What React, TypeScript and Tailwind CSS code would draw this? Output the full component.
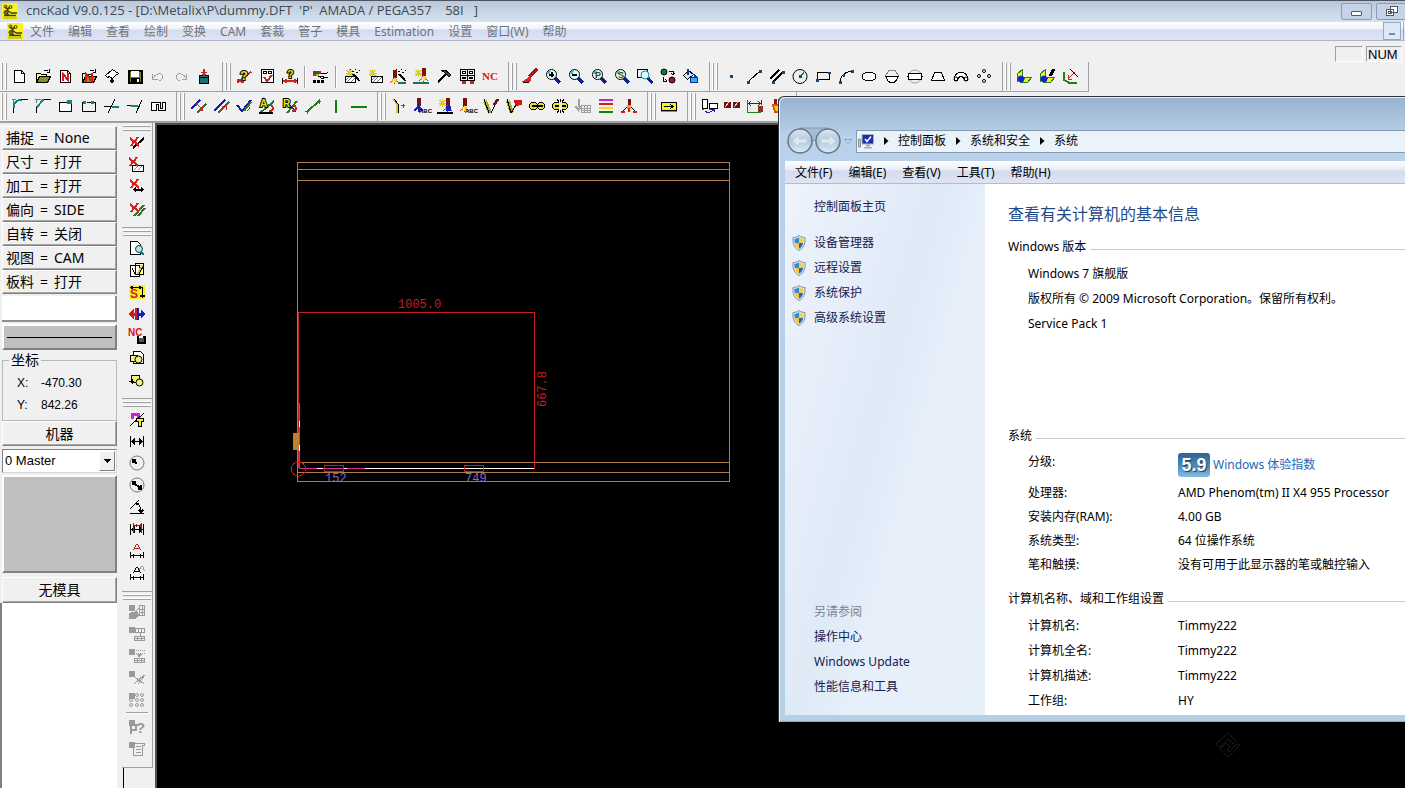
import React from "react";

type PathProps = { d: string; c?: string; w?: number; f?: string };

const P = ({ d, c = "#000", w = 1, f = "none" }: PathProps) => (
  <path d={d} stroke={c} strokeWidth={w} fill={f} />
);

type DiscProps = { x: number; y: number; r: number; f?: string; c?: string };

const Disc = ({ x, y, r, f = "none", c = "#000" }: DiscProps) => (
  <circle cx={x} cy={y} r={r} fill={f} stroke={c} shapeRendering="auto" />
);

type LabelProps = { x: number; y: number; s: number; c?: string; o?: string; children: string };

const T = ({ x, y, s, c = "#000", o = "none", children }: LabelProps) => (
  <text
    x={x}
    y={y}
    fontSize={s}
    fontWeight="bold"
    fill={c}
    stroke={o}
    strokeWidth={2}
    paintOrder="stroke"
    fontFamily="'Liberation Sans', sans-serif"
  >
    {children}
  </text>
);

/* Shared icon parts */
const Page = () => (
  <>
    <P d="M2.5 2.5h7l3 3v9h-10z" f="#fff" />
    <P d="M9.5 2.5v3h3" />
  </>
);

const Folder = () => (
  <>
    <P d="M1.5 13.5v-8h4l1 1h5v2" f="#ffff99" />
    <P d="M1.5 14.5l3-6h11l-3 6z" f="#8c8c20" />
    <P d="M8.5 3.5c2-2 4-2 5 0M14.5 1v3.5h-3" />
  </>
);

const Lens = () => (
  <>
    <P d="M10.5 10.5l4.5 4.5" c="#10208c" w={3} />
    <Disc x={6.5} y={6.5} r={5} f="#e0ffff" />
    <P d="M3 6l2-3" c="#20c8d8" w={2} />
  </>
);

const Punch = () => (
  <>
    <P d="M10.5 0v8" c="#7a1010" w={4} />
    <P d="M10.5 7l-4 6M10.5 7l4 6M10.5 7v7" c="#e02020" />
    <P d="M10.5 8v5" c="#f8e020" w={2} />
    <P d="M8.5 9v3M12.5 9v3" c="#f8a020" />
  </>
);

const Burst = () => (
  <P d="M5.5 1v8M1.5 5h8M2.5 2l6 6M8.5 2l-6 6" c="#d8cc20" />
);

const Wand = () => (
  <>
    <P d="M9 6l6.5 7" w={2} />
    <P d="M8 3h2M11 1h1M12 4h2M15 2h1M6 1h1" />
  </>
);

const Hatch = () => (
  <>
    <P d="M1.5 8.5h10v6h-10z" f="#fff" />
    <P d="M2 12l3-3M3 14l5-5M7 14l4-4" c="#777" />
  </>
);

const Cross = () => <P d="M1 3l9 8M9 2L2 11" c="#d02020" w={2} />;

const Dim = () => (
  <>
    <P d="M1.5 3v11M14.5 3v11M2 8.5h12" />
    <P d="M5.5 6v5L2.5 8.5zM10.5 6v5l3-2.5z" f="#000" />
  </>
);

const Chain = () => (
  <>
    <P d="M2.5 4.5h4l2 2v3l-2 2h-4l-2-2v-3zM10.5 4.5h3l2 2v3l-2 2h-3l-2-2v-3z" f="#e8e030" />
    <P d="M3 7.5h3v1H3zM10 7.5h3v1h-3z" f="#f0f0f0" />
    <P d="M6 8h5" w={2} />
  </>
);

const GraySquare = () => <path d="M0 1h6v6H0z" fill="#9a9a9a" />;

const GrayTable = () => (
  <P d="M5.5 10.5h10v4h-10zM5.5 12.5h10M8.5 10v5M12.5 10v5" c="#9a9a9a" />
);

const Bins = ({ extra }: { extra?: React.ReactNode }) => (
  <>
    <P d="M1.5 5.5l5-4v8l-5 4z" f="#f4f020" c="#208020" />
    <P d="M5 14.5l4-5h6.5l-4 5z" f="#f4f020" c="#208020" />
    <Disc x={5} y={11} r={3} f="#1020d0" c="#1020d0" />
    {extra}
  </>
);

const icons: Record<string, React.ReactNode> = {
  New: <Page />,
  Open: <Folder />,
  "New part": (
    <>
      <Page />
      <P d="M5 13V6l5 6V5" c="#e01818" w={2} />
    </>
  ),
  "Open NC": (
    <>
      <Folder />
      <P d="M5 14V6l6 7V5" c="#e01818" w={2} />
    </>
  ),
  Import: (
    <>
      <P d="M1.5 7.5L8.5 1.5l6 4-3 2-3 3-3-2-2 1z" f="#fff" />
      <P d="M7.5 10v5M5.5 12.5h4M6.5 14h2" w={2} />
    </>
  ),
  Save: (
    <>
      <P d="M1.5 2.5h13v12h-13z" f="#7a7a20" w={2} />
      <path d="M4 3h8v6H4z" fill="#fff" />
      <path d="M4 10h9v5H4z" fill="#000" />
      <path d="M10 11h2v3h-2z" fill="#fff" />
    </>
  ),
  Undo: <P d="M2.5 6v5h5M3.5 10c1-4 8-6 9-2 1 2-1 4-3 5" c="#a0a0a0" />,
  Redo: <P d="M13.5 6v5h-5M12.5 10c-1-4-8-6-9-2-1 2 1 4 3 5" c="#a0a0a0" />,
  Transfer: (
    <>
      <P d="M3.5 7.5h9v8h-9z" f="#187070" />
      <P d="M4 9.5h8" />
      <P d="M8 1v7" c="#d02020" w={2} />
      <P d="M5 4.5h6M6 6h4" c="#d02020" />
    </>
  ),
  "Query line": (
    <>
      <P d="M1 14.5L15.5 3.5M1 11.5l7 3" c="#d02020" w={2} />
      <T x={4} y={12} s={13} c="#e8e020" o="#000">?</T>
    </>
  ),
  "Check list": (
    <>
      <P d="M2.5 1.5h12v13h-12z" f="#fff" />
      <P d="M4.5 3.5h3v2h-3zM9.5 3.5h3v2h-3z" />
      <P d="M5 9l3 4 5-6" c="#d02020" w={2} />
    </>
  ),
  "Query distance": (
    <>
      <T x={5} y={10} s={11} c="#e8e020" o="#000">?</T>
      <P d="M1 13h14M3.5 11v4M12.5 11v4" c="#d02020" w={2} />
      <P d="M.5 10v6M15.5 10v6" />
    </>
  ),
  Properties: (
    <>
      <path d="M0 3h3v3H0z" fill="#7020a0" />
      <path d="M3 3h3v3H3z" fill="#107030" />
      <path d="M6 3h2v3H6z" fill="#d02020" />
      <path d="M0 6h3v2H0z" fill="#d02020" />
      <path d="M3 6h3v2H3z" fill="#c0b020" />
      <P d="M8 5.5h5l2-1M15 9.5h-3l-3 1-3-2h5" />
      <path d="M0 12h3v3H0zM4 12h3v3H4zM8 12h3v3H8z" fill="#000" />
    </>
  ),
  "Auto punch": (
    <>
      <Burst />
      <Hatch />
      <Wand />
    </>
  ),
  "Auto sheet": (
    <>
      <Burst />
      <P d="M4.5 8.5h11v6h-11z" f="#fff" />
      <P d="M5 12l3-3M6 14l5-5M10 14l5-5" c="#777" />
    </>
  ),
  "Auto cut": (
    <>
      <g transform="translate(-6 2)">
        <Punch />
      </g>
      <Wand />
      <P d="M8 15h8" c="#187070" w={2} />
    </>
  ),
  "Punch strike": (
    <>
      <Burst />
      <Punch />
      <P d="M0 15h16" c="#187070" w={2} />
    </>
  ),
  Hammer: (
    <>
      <P d="M2 14.5L11 5" w={2} />
      <P d="M6 2.5l4 0 5 4.5-2 2-4-4z" f="#444" />
    </>
  ),
  Turret: (
    <>
      <P d="M1.5 1.5h14v11h-14zM8.5 1v12M1 7.5h15" />
      <P d="M3.5 3.5h3v2h-3zM10.5 3.5h3v2h-3zM3.5 9.5h3v1h-3zM10.5 9.5h3v1h-3z" f="#fff" />
      <P d="M3 14h4M11 14h4" c="#d02020" w={3} />
    </>
  ),
  NC: (
    <text x={0} y={12} fontSize={11} fontWeight="bold" fill="#d01818" fontFamily="'Liberation Serif', serif">
      NC
    </text>
  ),
  Redraw: (
    <>
      <P d="M15 1L7 9" c="#a01818" w={3} />
      <P d="M9 8l-7 5h6z" c="#e02020" f="#e02020" />
      <P d="M1 14.5h6" />
    </>
  ),
  "Zoom in": (
    <>
      <Lens />
      <P d="M4 6.5h5M6.5 4v5" w={2} />
    </>
  ),
  "Zoom out": (
    <>
      <Lens />
      <P d="M4 6.5h5" w={2} />
    </>
  ),
  "Zoom part": (
    <>
      <Lens />
      <T x={4} y={10} s={9} c="#444400">P</T>
    </>
  ),
  "Zoom sheet": (
    <>
      <Lens />
      <T x={4} y={10} s={9} c="#444400">S</T>
    </>
  ),
  "Zoom window": (
    <>
      <P d="M.5 1.5h10v8h-10z" />
      <g transform="translate(2 1)">
        <Disc x={6} y={6} r={4} f="#e0ffff" c="#208898" />
        <P d="M9 9l4.5 5" c="#10208c" w={3} />
      </g>
    </>
  ),
  "Swap view": (
    <>
      <Disc x={4} y={4} r={3} f="#108030" />
      <Disc x={12} y={12} r={3} f="#a01818" />
      <P d="M9 3.5h4v3M3 9v4h4M11 5l2 2 2-2M5 11l2 2" />
    </>
  ),
  Fill: (
    <>
      <P d="M5.5 2.5l5 4-6 5-4-4z" f="#d8e8f0" />
      <P d="M4.5 1v6M11 6l3 5" c="#1030a0" w={2} />
      <P d="M7.5 14.5v-5h7v5z" f="#30b0e8" c="#1030a0" />
    </>
  ),
  Point: <path d="M7 7h3v3H7z" fill="#104878" />,
  Line: (
    <>
      <P d="M3 13L14 3" />
      <P d="M1 13h2v2H1zM13 2h2v2h-2z" c="#104878" f="#104878" />
    </>
  ),
  "Parallel line": (
    <>
      <P d="M1 11L10 2M4 14L14 4" w={2} />
      <P d="M3 13h2v2H3zM13 3h2v2h-2z" c="#104878" f="#104878" />
    </>
  ),
  Circle: (
    <>
      <Disc x={8} y={8.5} r={7} />
      <P d="M8 8.5l4-4" c="#187070" w={2} />
      <path d="M7 7h3v3H7z" fill="#104878" />
    </>
  ),
  Rectangle: (
    <>
      <P d="M2.5 4.5h12v7h-12z" />
      <P d="M1 11h2v2H1zM13 4h2v1h-2z" c="#104878" f="#104878" />
    </>
  ),
  Arc: (
    <>
      <P d="M2 14c0-5 4-10 11-11" />
      <P d="M1 13h2v2H1zM5 6h1v2H5zM13 2h2v2h-2z" c="#104878" f="#104878" />
    </>
  ),
  Oblong: <P d="M4.5 4.5h7l3 2v4l-3 2h-7l-3-2v-4z" f="#fff" />,
  "Single D": (
    <>
      <P d="M1.5 8l3-5 2-1h3l2 1 3 5" c="#888" />
      <P d="M1.5 8.5h13l-3 5-2 1h-3l-2-1z" f="#fff" />
    </>
  ),
  "Double D": (
    <>
      <Disc x={8} y={8.5} r={6.5} c="#999" />
      <P d="M2 5.5h12l1 3-1 3H2l-1-3z" f="#fff" />
    </>
  ),
  Trapezoid: <P d="M1.5 12.5l3-8h7l3 8z" f="#fff" />,
  Banana: (
    <>
      <P d="M1.5 12.5c-2-11 15-11 13 0h-3c0-5-7-5-7 0z" f="#fff" />
      <Disc x={3} y={11} r={2} />
      <Disc x={13} y={11} r={2} />
    </>
  ),
  "Bolt holes": (
    <>
      <Disc x={8} y={3} r={1.5} f="#fff" />
      <Disc x={3} y={8} r={1.5} f="#fff" />
      <Disc x={13} y={8} r={1.5} f="#fff" />
      <Disc x={8} y={13} r={1.5} f="#fff" />
    </>
  ),
  Bend: <Bins />,
  "Bend edit": <Bins extra={<P d="M15 1l-4 7" w={3} />} />,
  "Bend measure": (
    <>
      <P d="M1.5 3.5v8l5 3h8" c="#208020" w={2} />
      <P d="M13 4L6 11M6 7v4h4" c="#d02020" />
      <P d="M8 1l8 8" />
    </>
  ),
  Fillet: (
    <>
      <P d="M0 1.5h4M1.5 2v3" c="#777" />
      <P d="M1.5 15V9" />
      <P d="M1.5 10c0-5 3-8 8-8" c="#188080" w={2} />
      <P d="M9 1.5h7" />
    </>
  ),
  Chamfer: (
    <>
      <P d="M0 1.5h6M1.5 2v3" c="#777" />
      <P d="M1.5 15V9M8 1.5h8" />
      <P d="M1.5 9.5l7-8" c="#188080" w={2} />
    </>
  ),
  Notch: (
    <>
      <P d="M1.5 4.5h12v9h-12z" f="#fff" />
      <path d="M9 2h5v4H9z" fill="#188080" />
    </>
  ),
  "Double notch": (
    <>
      <P d="M1.5 4.5v9h13v-9M1 4.5h3M6 4.5h4M12 4.5h3" />
      <path d="M2 3h3v3H2zM10 3h3v3h-3z" fill="#188080" />
    </>
  ),
  Trim: (
    <>
      <P d="M0 8.5h8M4 15l7-14" />
      <P d="M8 8.5h7" c="#188080" w={2} />
    </>
  ),
  Extend: (
    <>
      <P d="M9 15l6-13" />
      <P d="M0 7.5h4" />
      <P d="M4 7.5h7" c="#188080" w={2} />
    </>
  ),
  Contour: <P d="M1.5 4.5h9v6h2v-6h3v8h-7v-6h-2v6h-5z" f="#fff" />,
  "Move parallel": (
    <>
      <P d="M1 11L10 2" c="#1020a0" w={2} />
      <P d="M7 15l9-9" c="#208020" w={2} />
      <P d="M6 5l6 6M8 5H6v3M12 8v4H9" c="#d02020" />
    </>
  ),
  "Offset line": (
    <>
      <P d="M1 13L12 2" c="#1020a0" w={2} />
      <P d="M5 15L16 4" c="#208020" w={2} />
      <P d="M8 12l5-6M9 8h4v4" c="#d02020" />
    </>
  ),
  Angle: (
    <>
      <P d="M1 7l5 6 9-11" c="#1020a0" w={2} />
      <P d="M8 13l7-9" c="#208020" w={2} />
      <P d="M12 8l2 2-3 3" c="#d02020" />
    </>
  ),
  "Angle A": (
    <>
      <P d="M1 15l14-12" c="#208020" w={2} />
      <T x={1} y={9} s={10} c="#e8e020" o="#000">A</T>
      <P d="M0 14.5h14" w={2} />
      <P d="M12 7c3 3 2 6-2 6" c="#d02020" w={2} />
    </>
  ),
  "Angle R": (
    <>
      <P d="M5 15L15 3" c="#208020" w={2} />
      <P d="M4 2l10 12" c="#1020a0" />
      <T x={1} y={9} s={10} c="#e8e020" o="#000">R</T>
      <P d="M12 7c3 3 2 6-2 6" c="#d02020" w={2} />
    </>
  ),
  "Tangent line": (
    <>
      <P d="M2 14L14 3" c="#208020" w={2} />
      <P d="M0 13.5h4M2 12v4M12 3h4M14 1v5" c="#d02020" />
    </>
  ),
  Vertical: <P d="M8 2v13" c="#108010" w={2} />,
  Horizontal: <P d="M0 9h16" c="#108010" w={2} />,
  Node: (
    <>
      <P d="M2 1l4 5v9" c="#d8c840" w={2} />
      <P d="M3 1l4 5v9" />
      <P d="M10 7.5h4M12 6v4" c="#d02020" />
    </>
  ),
  "Punch text": (
    <>
      <g transform="translate(-6 0)">
        <P d="M10.5 0v8" c="#7a1010" w={4} />
        <P d="M6.5 13l4-5 4 5M10.5 7v7" c="#1020c0" w={2} />
      </g>
      <T x={5} y={15} s={6}>ABC</T>
    </>
  ),
  "Punch burst": (
    <>
      <Burst />
      <Punch />
      <P d="M9 8h4v4H9z" c="#1020c0" f="#1020c0" />
      <P d="M0 15h16" w={2} />
    </>
  ),
  "Strike text": (
    <>
      <g transform="translate(-6 0)">
        <Punch />
      </g>
      <T x={5} y={15} s={6}>ABC</T>
    </>
  ),
  "Edit tooling": (
    <>
      <P d="M2 3l5 12" c="#a8a840" w={4} />
      <P d="M1 1l5 14M8 15L14 3" />
      <P d="M15 1l-4 6" c="#701010" w={3} />
    </>
  ),
  "Erase tooling": (
    <>
      <P d="M2 3l4 12" c="#a8a840" w={4} />
      <P d="M9 3h6v3l-5 1z" c="#d01818" f="#d01818" w={2} />
      <P d="M1 1l4 14M10 7l-5 8" />
    </>
  ),
  Link: <Chain />,
  Unlink: (
    <>
      <Chain />
      <path d="M7 4h3v8H7z" fill="#f0f0f0" />
      <P d="M8.5 1v3M5 1l2 3M12 1l-2 3M8.5 12v3M5 15l2-3M12 15l-2-3" />
    </>
  ),
  "Tool table": (
    <>
      <P d="M3.5 1v8M.5 8l3 4 3-4" c="#a0a0a0" w={2} />
      <P d="M6.5 7.5h9v7h-9zM6.5 10h9M6.5 12h9M9.5 7.5v7M12.5 7.5v7" c="#a0a0a0" />
    </>
  ),
  Layers: (
    <>
      <P d="M1 2h14" c="#d020d0" w={2} />
      <P d="M1 6h14" c="#d02020" w={2} />
      <P d="M1 10h14" c="#e8e010" w={2} />
      <P d="M1 14h14" c="#108010" w={2} />
    </>
  ),
  "Split punch": (
    <>
      <P d="M8 1v6" c="#7a1010" w={3} />
      <P d="M8 7l-6 6M8 7l6 6" />
      <path d="M6 7h4v4H6z" fill="#f0a020" />
      <P d="M0 13.5h4M12 13.5h4M8 10v4" c="#d02020" w={2} />
    </>
  ),
  "Next step": (
    <>
      <P d="M.5 4.5h15v8H.5z" f="#f4f020" />
      <P d="M3 8.5h9M9 6l3 2.5L9 11" />
      <P d="M0 13.5h16" c="#888" />
    </>
  ),
  "Sheet move": (
    <>
      <P d="M1.5 1.5h5v9h-5zM8.5 5.5h8v5h-8z" f="#fff" />
      <P d="M4 13l3 2 6-3M10 11h3v3" c="#1020c0" />
      <P d="M1 11.5h2M8 11.5h2" c="#d02020" />
    </>
  ),
  Clamps: (
    <>
      <P d="M0 5.5h7M9 5.5h7M0 8.5h7M9 8.5h7" c="#701010" w={3} />
      <P d="M1 9l4-5M10 9l4-5" c="#f0d0d0" />
    </>
  ),
  "Sheet size": (
    <>
      <P d="M.5 2v12.5h13" c="#208020" />
      <P d="M14.5 2v5M2 5.5h11M4 3L2 5.5 4 8M11 3l2 2.5L11 8" c="#1020c0" />
      <path d="M11 8h5v6h-5z" fill="#903020" />
    </>
  ),
  Torch: (
    <>
      <P d="M5 1v6M9 1v6" c="#901818" w={3} />
      <P d="M3 7h8l-2 7H5z" c="#e05010" f="#f8d020" w={2} />
    </>
  ),
  "Delete entity": (
    <>
      <P d="M4 13L15 3" w={2} />
      <Cross />
    </>
  ),
  "Delete area": (
    <>
      <P d="M3.5 8.5h11v6h-11z" f="#fff" />
      <P d="M5 13l4-4M9 13l4-4" c="#888" />
      <g transform="translate(-1 -2)">
        <Cross />
      </g>
    </>
  ),
  "Delete dimension": (
    <>
      <g transform="translate(0 -2)">
        <Cross />
      </g>
      <P d="M5 10.5h9M7 8.5l-2 2 2 2M12 8.5l2 2-2 2" w={2} />
    </>
  ),
  "Delete parallel": (
    <>
      <P d="M5 15L15 4M9 15l7-8" c="#208020" w={2} />
      <Cross />
    </>
  ),
  Preview: (
    <>
      <P d="M1.5 1.5h7l3 3v10h-10z" f="#fff" />
      <Disc x={10} y={9} r={3.5} f="#a0e8f0" c="#333" />
      <P d="M12 12l3 3" c="#187070" w={2} />
    </>
  ),
  Notes: (
    <>
      <P d="M1.5 3.5h9v11h-9zM6.5 1.5h8v11h-8z" f="#fff" />
      <P d="M3 6l3 6" />
      <P d="M14 3l-5 9" c="#d8d020" w={3} />
      <P d="M15 3l-5 9" />
    </>
  ),
  Simulate: (
    <>
      <path d="M0 1h16v14H0z" fill="#f8f020" />
      <T x={1} y={14} s={12} c="#e01818">S</T>
      <P d="M1 3.5h13M13.5 3v11" />
      <P d="M11 11.5h5M3 2v3M11 2v3" w={2} />
    </>
  ),
  Mirror: (
    <>
      <P d="M7 2v12" c="#d01818" w={2} />
      <P d="M0 8l4-4v3h3v2H4v3z" c="#d01818" f="#d01818" />
      <P d="M9 2v12" c="#1020c0" w={2} />
      <P d="M16 8l-4-4v3H9v2h3v3z" c="#1020c0" f="#1020c0" />
    </>
  ),
  "Save NC": (
    <>
      <T x={-1} y={8} s={10} c="#d01818">NC</T>
      <P d="M8.5 8.5h7v6h-7z" f="#555" w={2} />
      <path d="M10 8h4v2h-4z" fill="#fff" />
    </>
  ),
  "Copy part": (
    <>
      <P d="M4.5 1.5h7l3 3v9h-10z" f="#fff" />
      <P d="M1.5 5.5h7v6h-7z" f="#f4f080" />
      <Disc x={9.5} y={9.5} r={3.5} f="#f4f080" />
    </>
  ),
  "Paste part": (
    <>
      <P d="M2.5 3.5h8v7h-8z" f="#f4f080" />
      <Disc x={10.5} y={10.5} r={3.5} f="#f4f080" />
      <P d="M0 9.5h5M3 7v5" />
    </>
  ),
  "Text style": (
    <>
      <P d="M3 8V3h6v5" c="#d020d0" w={3} />
      <P d="M1 15L15 2" />
      <P d="M7 9h8M11 9v7" w={4} />
      <P d="M8 9h6M11 9v6" c="#f4f020" w={2} />
    </>
  ),
  "Linear dimension": <Dim />,
  "Radius dimension": (
    <>
      <Disc x={8} y={8} r={7} c="#777" />
      <P d="M4 5l4 4M4 8V5h3" w={2} />
    </>
  ),
  "Diameter dimension": (
    <>
      <Disc x={8} y={8} r={7} c="#777" />
      <P d="M4 5l8 7M4 8V5h3M12 8v4H9" w={2} />
    </>
  ),
  "Angle dimension": (
    <>
      <P d="M1 10L10 1M1 14.5h14M8 4c3 2 4 5 4 9" />
      <P d="M7 5h3M10 11l2 2 2-2" w={2} />
    </>
  ),
  "Edit dimension": (
    <>
      <Dim />
      <P d="M4.5 2v10M12.5 2v10M5 4.5h8M7 3v3M11 3v3" c="#901818" />
    </>
  ),
  "Text dimension": (
    <>
      <P d="M4.5 7l3-6h1l3 6M5.5 5h5" c="#b02020" />
      <P d="M1.5 9v6M14.5 9v6M2 12.5h12M4.5 10.5v4M11.5 10.5v4" />
    </>
  ),
  "Move dimension": (
    <>
      <P d="M9.5 6l3-5h1l2 5" c="#999" />
      <P d="M4.5 8l3-6h1l3 6M5.5 6h5" />
      <P d="M1.5 9v6M14.5 9v6M2 12.5h12M4.5 10.5v4M11.5 10.5v4" />
    </>
  ),
  "Nest sheet": (
    <>
      <GraySquare />
      <path d="M0 9l8-2 2 4-4 4H0z" fill="#9a9a9a" />
      <P d="M10.5 1.5h5v10h-5zM10 5.5h5M10 8.5h5M13.5 1v10M6 8l4-4" c="#9a9a9a" />
    </>
  ),
  "Nest table": (
    <>
      <GraySquare />
      <GrayTable />
      <P d="M6.5 2.5h9v4h-9zM9.5 2v4M12.5 2v4M11 6v4" c="#9a9a9a" />
    </>
  ),
  "Nest insert": (
    <>
      <GraySquare />
      <GrayTable />
      <path d="M7 2.5h9M7 5.5h9" stroke="#9a9a9a" strokeDasharray="1 1" />
      <path d="M8 6h5l-3 4z" fill="#9a9a9a" />
    </>
  ),
  "Nest cut": (
    <>
      <GraySquare />
      <P d="M5 14L15 5M6 7l9 7M9 14l7-9" c="#9a9a9a" />
    </>
  ),
  "Nest array": (
    <>
      <GraySquare />
      {[3, 8, 13].map((y) =>
        [2, 8, 13].map((x) => <Disc key={`${x}-${y}`} x={x} y={y} r={1.5} c="#9a9a9a" />)
      )}
    </>
  ),
  "Nest query": (
    <>
      <GraySquare />
      <P d="M2 6v9M2 11h5V6H2" c="#9a9a9a" w={2} />
      <T x={7} y={14} s={15} c="#9a9a9a">?</T>
    </>
  ),
  "Nest report": (
    <>
      <GraySquare />
      <P d="M5.5 2.5h10v2h-2v10h-9v-10M7 5.5h5M7 8.5h5M7 11.5h5" c="#9a9a9a" />
    </>
  ),
};

const Icon = ({ name }: { name: string }) => (
  <svg width="16" height="16" viewBox="0 0 16 16" shapeRendering="crispEdges" className="overflow-visible shrink-0">
    {icons[name]}
  </svg>
);

/* "|" in a list stands for a thin divider */
const rowOne: string[][] = [
  ["New", "Open", "New part", "Open NC", "Import", "Save", "Undo", "Redo", "Transfer"],
  [
    "Query line", "Check list", "Query distance", "|", "Properties", "|", "Auto punch",
    "Auto sheet", "Auto cut", "Punch strike", "Hammer", "Turret", "NC",
  ],
  ["Redraw", "Zoom in", "Zoom out", "Zoom part", "Zoom sheet", "Zoom window", "Swap view", "Fill"],
  [
    "Point", "Line", "Parallel line", "Circle", "Rectangle", "Arc", "Oblong", "Single D",
    "Double D", "Trapezoid", "Banana", "Bolt holes",
  ],
  ["Bend", "Bend edit", "Bend measure"],
];

const rowTwo: string[][] = [
  ["Fillet", "Chamfer", "Notch", "Double notch", "Trim", "Extend", "Contour"],
  ["Move parallel", "Offset line", "Angle", "Angle A", "Angle R", "Tangent line", "Vertical", "Horizontal"],
  [
    "Node", "Punch text", "Punch burst", "Strike text", "Edit tooling", "Erase tooling",
    "Link", "Unlink", "Tool table", "Layers", "Split punch",
  ],
  ["Next step"],
  ["Sheet move", "Clamps", "Sheet size", "Torch"],
];

const sideBands: string[][] = [
  ["Delete entity", "Delete area", "Delete dimension", "Delete parallel"],
  ["Preview", "Notes", "Simulate", "Mirror", "Save NC", "Copy part", "Paste part"],
  [
    "Text style", "Linear dimension", "Radius dimension", "Diameter dimension",
    "Angle dimension", "Edit dimension", "Text dimension", "Move dimension",
  ],
  ["Nest sheet", "Nest table", "Nest insert", "Nest cut", "Nest array", "|", "Nest query", "Nest report"],
];

const Band = ({ items }: { items: string[] }) => (
  <div className="flex h-[30px] shrink-0 border-r border-b border-[#a0a0a0] pr-[7px]">
    <div className="mr-px flex h-7 w-2 gap-0.5 pl-0.5 pt-px">
      <span className="w-[3px] border-r border-[#a0a0a0] bg-white" />
      <span className="w-[3px] border-r border-[#a0a0a0] bg-white" />
    </div>
    {items.map((item, i) =>
      item === "|" ? (
        <span key={i} className="mx-[3px] mt-1 h-[22px] w-0.5 border-l border-[#a0a0a0] bg-white" />
      ) : (
        <button key={item} aria-label={item} className="flex w-[23px] items-start pl-1 pt-1.5">
          <Icon name={item} />
        </button>
      )
    )}
  </div>
);

const SideBand = ({ items }: { items: string[] }) => (
  <div className="border-r border-b border-[#a0a0a0] pb-[7px]">
    <div className="mb-px flex h-2 flex-col gap-0.5 px-px pt-0.5">
      <span className="h-[3px] border-b border-[#a0a0a0] bg-white" />
      <span className="h-[3px] border-b border-[#a0a0a0] bg-white" />
    </div>
    {items.map((item, i) =>
      item === "|" ? (
        <span key={i} className="mx-1 mb-0.5 mt-px block h-0.5 border-t border-[#a0a0a0] bg-white" />
      ) : (
        <button key={item} aria-label={item} className="flex h-[22px] w-full items-start pl-[7px] pt-[3px]">
          <Icon name={item} />
        </button>
      )
    )}
  </div>
);

const AppLogo = () => (
  <svg width="16" height="16" viewBox="0 0 16 16" className="shrink-0">
    <path d="M0 0h16v16H0z" fill="#f8f020" />
    <path d="M3.500 3.500l2 3M8 4L5 7M5 7l4 3M9 10h6M4 10l3 2M10 12.500h4M2 12.500h9" stroke="#443c08" strokeWidth="1.500" fill="none" />
    <circle cx="3.500" cy="3.500" r="1.500" fill="none" stroke="#443c08" />
    <circle cx="8.500" cy="4" r="1.500" fill="none" stroke="#443c08" />
    <circle cx="4" cy="9.500" r="2" fill="#786c10" stroke="#443c08" />
    <path d="M1 15h14" stroke="#b8a800" />
  </svg>
);

const mainMenu = [
  "文件", "编辑", "查看", "绘制", "变换", "CAM", "套裁", "管子", "模具", "Estimation", "设置", "窗口(W)", "帮助",
];

const states = [
  ["捕捉", "None"],
  ["尺寸", "打开"],
  ["加工", "打开"],
  ["偏向", "SIDE"],
  ["自转", "关闭"],
  ["视图", "CAM"],
  ["板料", "打开"],
];

const raised =
  "border border-t-white border-l-white border-r-[#808080] border-b-[#808080] bg-[#f0f0f0] shadow-[inset_-1px_-1px_0_#a8a8a8]";

const LeftPanel = () => (
  <aside className="flex w-[122px] shrink-0 flex-col pl-0.5 pr-[5px] pt-[3px] text-sm text-black">
    {states.map(([label, value]) => (
      <button key={label} className={`${raised} flex h-6 items-center gap-1.5 pl-[3px]`}>
        <span>{label}</span>
        <span>=</span>
        <span>{value}</span>
      </button>
    ))}
    <input
      aria-label="命令"
      className="mt-0.5 h-[26px] w-full border-r-2 border-b-2 border-[#909090] bg-white px-1 outline-none"
    />
    <div className="mt-0.5 flex h-[26px] items-center border-2 border-t-white border-l-white border-r-[#808080] border-b-[#808080] bg-[#c0c0c0] px-[3px]">
      <span className="h-px w-full bg-black" />
    </div>
    <fieldset className="h-[71px] border border-[#b8b8b8] px-1.5">
      <legend className="px-0.5 leading-5">坐标</legend>
      <dl className="grid grid-cols-[24px_1fr] pl-2 pt-0.5 font-['Liberation_Sans'] text-xs leading-[22px]">
        <dt>X:</dt>
        <dd>-470.30</dd>
        <dt>Y:</dt>
        <dd>842.26</dd>
      </dl>
    </fieldset>
    <button className={`${raised} h-[25px] leading-5`}>机器</button>
    <select
      aria-label="机器"
      defaultValue="0 Master"
      className="mt-[3px] h-6 w-full appearance-none border border-t-[#808080] border-l-[#808080] border-r-[#d8d8d8] border-b-[#d8d8d8] bg-white pl-0.5 font-['Liberation_Sans'] text-[13px] text-black"
    >
      <option>0 Master</option>
    </select>
    <div className="pointer-events-none -mt-[22px] mr-0.5 flex h-5 w-4 items-center justify-center self-end border border-t-white border-l-white border-r-[#808080] border-b-[#808080] bg-[#f0f0f0]">
      <svg width="7" height="4" viewBox="0 0 7 4" shapeRendering="crispEdges">
        <path d="M0 0h7L3.500 4z" />
      </svg>
    </div>
    <div className="mt-1 h-[98px] shrink-0 border-2 border-t-white border-l-white border-r-[#808080] border-b-[#808080] bg-[#c0c0c0]" />
    <button className={`${raised} mt-1 h-[26px] shrink-0 leading-5`}>无模具</button>
    <div className="-ml-0.5 grow border-l-2 border-[#808080] bg-white" />
  </aside>
);

const tan = "#b07c48";
const red = "#c81c20";

/* Sheet, clamps and part outline */
const Drawing = () => (
  <svg width="583" height="373" viewBox="157 125 583 373" fill="none" shapeRendering="crispEdges">
    <rect x="297.5" y="162.5" width="432" height="319" stroke={tan} />
    <path d="M297 169.5h433M297 180.5h433M297 462.5h433M297 472.5h433" stroke={tan} />
    <path d="M298.5 468V312.5h236V469" stroke={red} />
    <path d="M293 433h6v17h-6z" fill="#c08028" />
    <path d="M299.5 403v66" stroke="#d828a0" />
    <path d="M299.5 421v6M299.5 445v6" stroke="#fff" />
    <path d="M299 468.5h66" stroke="#e82898" />
    <path d="M317 468.5h6M343 468.5h4M365 468.5h169" stroke="#fff" />
    <path d="M324.5 465.5h19v6h-19zM464.5 465.5h19v6h-19z" stroke={red} />
    <circle cx="298.5" cy="469" r="7" stroke={red} />
    <g fontFamily="'Liberation Mono', monospace" fontSize="12">
      <text x="398" y="308" fill={red}>1005.0</text>
      <text x="0" y="0" fill={red} transform="translate(546 407) rotate(-90)">667.8</text>
      <text x="325" y="482" fill="#9c60c8">152</text>
      <text x="465" y="482" fill="#9c60c8">749</text>
    </g>
  </svg>
);

const Shield = () => (
  <svg width="14" height="16" viewBox="0 0 14 16" className="shrink-0">
    <path d="M7 .5C5 2 3 2.500 1 2.500c-.5 6 1 10.500 6 13 5-2.500 6.500-7 6-13-2 0-4-.5-6-2z" fill="#dce4ec" stroke="#8090a0" />
    <path d="M7 2.300C5.500 3.300 4 3.800 2.500 3.900c-.2 1.500 0 3 .3 4.100H7z" fill="#3a88c8" />
    <path d="M7 2.300c1.500 1 3 1.500 4.500 1.600.2 1.500 0 3-.3 4.100H7z" fill="#f0d050" />
    <path d="M2.800 8c.6 2.600 2 4.500 4.200 5.800V8z" fill="#f0c838" />
    <path d="M11.200 8c-.6 2.600-2 4.500-4.200 5.800V8z" fill="#2868a8" />
  </svg>
);

const Computer = () => (
  <svg width="16" height="15" viewBox="0 0 16 15" className="shrink-0">
    <path d="M.5 5h2v8h-2z" fill="#c8d0d0" stroke="#889090" />
    <path d="M4 .5h11.500v9.500H4z" fill="#1830b0" stroke="#a8b4c0" />
    <path d="M7 5l2 2.500L13 2.500" stroke="#fff" strokeWidth="1.500" fill="none" />
    <path d="M8 10.500h4v2H8zM6 13h8v1.500H6z" fill="#a0acb8" />
  </svg>
);

const Arrow = () => (
  <svg width="5" height="8" viewBox="0 0 5 8">
    <path d="M0 0l4.500 4L0 8z" />
  </svg>
);

const NavButtons = () => (
  <svg width="66" height="28" viewBox="0 0 66 28">
    <defs>
      <linearGradient id="orb" x1="0" y1="0" x2="0" y2="1">
        <stop offset="0" stopColor="#dde8f2" />
        <stop offset=".5" stopColor="#b4c8dc" />
        <stop offset="1" stopColor="#dcecf8" />
      </linearGradient>
    </defs>
    <path d="M14 1h28v8c-6 6-22 6-28 0z" fill="#a4bcd4" stroke="#8098b0" />
    {[14, 42].map((x) => (
      <circle key={x} cx={x} cy="14" r="12" fill="url(#orb)" stroke="#64788c" strokeWidth="1.500" />
    ))}
    <path d="M6 14l7-6v4h8v4h-8v4z" fill="#dce8f2" stroke="#c0d0de" />
    <path d="M50 14l-7-6v4h-8v4h8v4z" fill="#dce8f2" stroke="#c0d0de" />
    <path d="M58.500 12.500h7l-3.500 4z" fill="#c8dcf0" stroke="#8ca4bc" />
  </svg>
);

const Section = ({ title, className, children }: { title: string; className: string; children: React.ReactNode }) => (
  <section className={className}>
    <div className="flex h-5 items-center gap-1">
      <h2>{title}</h2>
      <span className="mt-1 h-px grow bg-[#c8c8c8]" />
    </div>
    {children}
  </section>
);

const Row = ({ label, value, className }: { label: string; value: string; className: string }) => (
  <div className={`flex items-center ${className}`}>
    <dt className="w-[150px]">{label}</dt>
    <dd>{value}</dd>
  </div>
);

const tasks = ["设备管理器", "远程设置", "系统保护", "高级系统设置"];
const related = ["操作中心", "Windows Update", "性能信息和工具"];

const SystemWindow = () => (
  <div className="absolute left-[778px] right-0 top-24 overflow-hidden whitespace-nowrap rounded-tl-md border-l border-t border-[#303438] bg-[linear-gradient(#98b2cf_0,#b9d1ea_40px,#b9d1ea_120px,#b4cfe6_100%)] pb-[7px] pl-1.5 text-xs text-black shadow-[inset_1px_1px_0_#e8f0f8,inset_0_-1px_0_#58b8d8]">
    <div className="flex items-center pb-[6px] pt-[30px]">
      <div className="ml-px flex">
        <NavButtons />
      </div>
      <div className="ml-1 flex h-[23px] grow items-center border border-r-0 border-[#8498b0] bg-[#eaf2fa] pl-px">
        <Computer />
        {["控制面板", "系统和安全", "系统"].map((crumb) => (
          <span key={crumb} className="flex items-center">
            <span className="ml-2.5 mr-[9px]">
              <Arrow />
            </span>
            <a href="#" className="text-black">{crumb}</a>
          </span>
        ))}
      </div>
    </div>
    <nav className="flex h-[23px] items-center gap-4 border-b border-[#b4bccc] bg-[linear-gradient(#fff,#e6ebf6_9px,#d5dbee_10px,#e0e4f2)] pl-2.5 pt-0.5">
      {["文件(F)", "编辑(E)", "查看(V)", "工具(T)", "帮助(H)"].map((item) => (
        <button key={item}>{item}</button>
      ))}
    </nav>
    <div className="flex">
      <aside className="flex w-[200px] shrink-0 flex-col bg-[linear-gradient(105deg,#eef3fb_0,#e4edf9_30%,#dfeaf7_45%,#e6effa_60%,#e6f0fb_100%)] pb-4 pt-2.5 text-[#15204e]">
        <a href="#" className="mb-[11px] ml-[29px] leading-[25px]">控制面板主页</a>
        {tasks.map((task) => (
          <a href="#" key={task} className="flex h-[25px] items-center gap-2 pl-[7px]">
            <Shield />
            {task}
          </a>
        ))}
        <div className="ml-[29px] mt-auto flex flex-col leading-[25px]">
          <span className="text-[#7c828c]">另请参阅</span>
          {related.map((item) => (
            <a href="#" key={item}>{item}</a>
          ))}
        </div>
      </aside>
      <main className="grow bg-white pb-0.5 pl-[23px] pt-[18px]">
        <h1 className="text-base leading-6 text-[#1e4a8c]">查看有关计算机的基本信息</h1>
        <Section title="Windows 版本" className="mt-[11px]">
          <div className="mt-1 pl-5 leading-[25px]">
            <p>Windows 7 旗舰版</p>
            <p>版权所有 © 2009 Microsoft Corporation。保留所有权利。</p>
            <p>Service Pack 1</p>
          </div>
        </Section>
        <Section title="系统" className="mt-[90px]">
          <dl className="pl-5">
            <div className="flex h-[35px] items-center">
              <dt className="w-[150px] pb-1">分级:</dt>
              <dd className="flex items-center gap-[3px] pt-0.5">
                <span className="flex h-6 w-8 items-center justify-center rounded-[3px] bg-[linear-gradient(#2c6490,#4888bc_50%,#88bce0)] font-['Liberation_Sans'] text-lg font-bold text-white [text-shadow:1px_1px_1px_#183050]">
                  5.9
                </span>
                <a href="#" className="text-[#1c68b4]">Windows 体验指数</a>
              </dd>
            </div>
            <Row className="h-6" label="处理器:" value="AMD Phenom(tm) II X4 955 Processor" />
            <Row className="h-6" label="安装内存(RAM):" value="4.00 GB" />
            <Row className="h-6" label="系统类型:" value="64 位操作系统" />
            <Row className="h-6" label="笔和触摸:" value="没有可用于此显示器的笔或触控输入" />
          </dl>
        </Section>
        <Section title="计算机名称、域和工作组设置" className="mt-3">
          <dl className="mt-1 pl-5">
            <Row className="h-[25px]" label="计算机名:" value="Timmy222" />
            <Row className="h-[25px]" label="计算机全名:" value="Timmy222" />
            <Row className="h-[25px]" label="计算机描述:" value="Timmy222" />
            <Row className="h-[25px]" label="工作组:" value="HY" />
          </dl>
        </Section>
      </main>
    </div>
  </div>
);

const App: React.FC = () => {
  return (
    <div className="relative flex h-screen w-full flex-col overflow-hidden bg-[#f0f0f0] font-['Noto_Sans','Noto_Sans_CJK_SC',sans-serif]">
      {/* Title bar */}
      <header className="flex h-[22px] shrink-0 items-center border-t border-[#505460] bg-[linear-gradient(#b8c8da,#d5e3f0)] pb-px pl-0.5 text-[13px] text-[#404850]">
        <AppLogo />
        <h1 className="ml-2 grow whitespace-pre font-['Open_Sans']">
          {"cncKad V9.0.125 - [D:\\Metalix\\P\\dummy.DFT  'P'  AMADA / PEGA357    58I   ]"}
        </h1>
        <button aria-label="最小化" className="mr-2 flex h-[17px] w-[31px] items-center justify-center rounded-[2px] border border-[#8c9cb4] bg-[#c4d4e6]">
          <span className="mt-1 h-[5px] w-[11px] rounded-[1px] border border-[#505868] bg-white" />
        </button>
        <button aria-label="还原" className="-ml-1 -mr-0.5 flex h-[17px] w-[31px] items-center justify-center rounded-[2px] border border-[#8c9cb4] bg-[#c4d4e6]">
          <svg width="12" height="11" viewBox="0 0 12 11" fill="#fff" stroke="#505868" shapeRendering="crispEdges">
            <path d="M4.500.5h7v6h-7zM.5 3.500h7v6h-7zM2.500 5.500h3v2h-3z" />
          </svg>
        </button>
      </header>

      {/* Menu bar */}
      <nav className="flex h-[19px] shrink-0 items-center gap-3.5 border-b border-[#b0b6c8] bg-[linear-gradient(#fff,#eef2fa_7px,#d5dbef_8px,#e0e4f4)] pl-[7px] text-xs text-[#707478]">
        <span className="-mr-[7px]">
          <AppLogo />
        </span>
        {mainMenu.map((item) => (
          <button key={item} className="pt-0.5">{item}</button>
        ))}
        <div className="ml-auto flex gap-0.5">
          <button aria-label="最小化文档" className="flex h-[18px] w-[18px] items-center justify-center border border-[#98a8c0] bg-[#dce8f6]">
            <span className="mt-1.5 h-0.5 w-1.5 bg-[#7888a0]" />
          </button>
          <span className="h-[18px] w-0.5 border-l border-[#98a8c0]" />
        </div>
      </nav>

      {/* Keyboard indicators */}
      <div className="flex h-[21px] shrink-0 justify-end gap-[3px] pr-[3px] pt-[5px] text-xs leading-4 text-black">
        <span className="w-7 border border-t-[#a0a0a0] border-l-[#a0a0a0] border-r-white border-b-white" />
        <span className="w-9 border border-t-[#a0a0a0] border-l-[#a0a0a0] border-r-white border-b-white pl-px font-['Liberation_Sans'] text-[13px] leading-[15px]">
          NUM
        </span>
      </div>

      {/* Toolbars */}
      <div className="-ml-px flex shrink-0">
        {rowOne.map((items) => (
          <Band key={items[0]} items={items} />
        ))}
      </div>
      <div className="-ml-px flex shrink-0">
        {rowTwo.map((items) => (
          <Band key={items[0]} items={items} />
        ))}
      </div>

      <div className="flex min-h-0 grow border-t border-[#a0a0a0]">
        <LeftPanel />
        <div className="flex w-[31px] shrink-0 flex-col">
          {sideBands.map((items) => (
            <SideBand key={items[0]} items={items} />
          ))}
          <div className="ml-px grow border-l border-black" />
        </div>
        <div className="relative ml-0.5 grow overflow-hidden border-l-2 border-t-2 border-[#505050] bg-black">
          <Drawing />
          <svg
            width="26"
            height="26"
            viewBox="0 0 26 26"
            fill="none"
            stroke="#1c1c1c"
            className="absolute bottom-[30px] right-[164px]"
          >
            <path d="M1 12L13 1l8 8-3 3-5-5-8 8zM25 13L13 25l-8-8 6-6 4 4-3 3 2 2 8-8z" />
          </svg>
        </div>
      </div>

      <SystemWindow />
    </div>
  );
};

export default App;
